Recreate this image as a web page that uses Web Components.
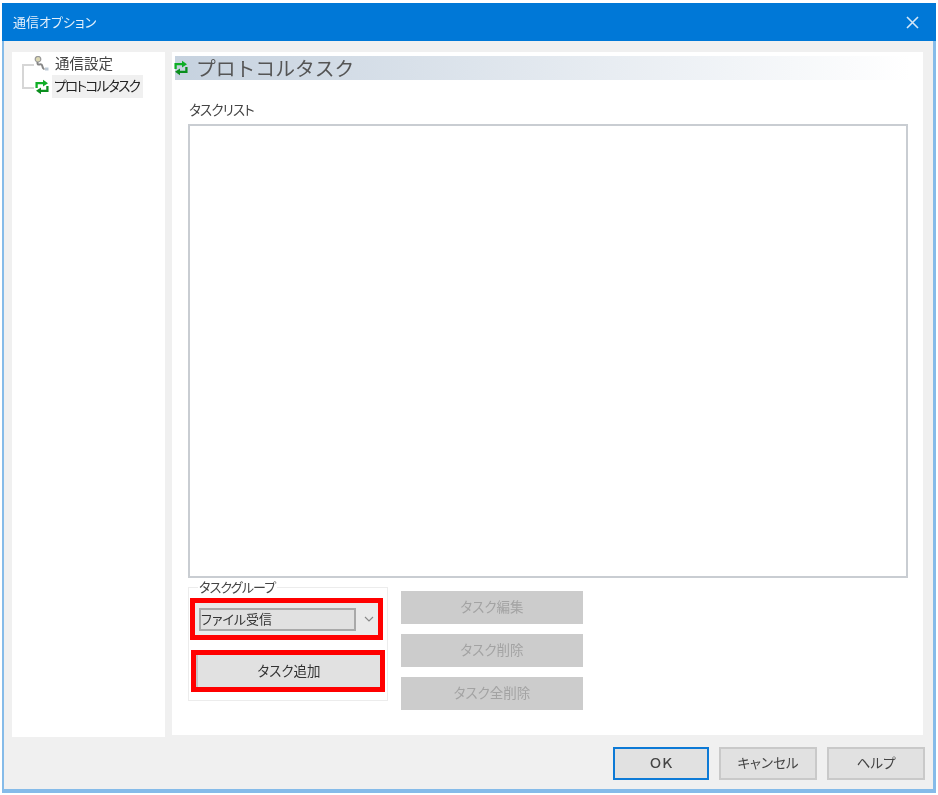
<!DOCTYPE html>
<html lang="ja">
<head>
<meta charset="utf-8">
<title>通信オプション</title>
<style>
  html, body { margin: 0; padding: 0; background: #fff; }
  body { font-family: "Noto Sans CJK JP", "Noto Sans", sans-serif; font-feature-settings: "palt"; }
</style>
</head>
<body>
<x-dialog heading="通信オプション">
  <x-tree slot="nav">
    <x-tree-item icon="plug" pos="first">通信設定</x-tree-item>
    <x-tree-item icon="cycle" pos="last" selected>プロトコルタスク</x-tree-item>
  </x-tree>
  <x-task-page slot="main" heading="プロトコルタスク">
    <x-group-box label="タスクグループ" slot="group">
      <x-mark><x-combo value="ファイル受信"></x-combo></x-mark>
      <x-mark wide><x-btn fill>タスク追加</x-btn></x-mark>
    </x-group-box>
    <x-btn slot="actions" disabled>タスク編集</x-btn>
    <x-btn slot="actions" disabled>タスク削除</x-btn>
    <x-btn slot="actions" disabled>タスク全削除</x-btn>
  </x-task-page>
  <x-btn slot="footer" dialog default>ＯＫ</x-btn>
  <x-btn slot="footer" dialog>キャンセル</x-btn>
  <x-btn slot="footer" dialog>ヘルプ</x-btn>
</x-dialog>

<script>
const ICONS = {
  plug: `<svg width="16" height="16" viewBox="0 0 16 16" fill="none">
    <circle cx="4" cy="3.2" r="2.8" fill="#dcd8b4" stroke="#999" stroke-width="1.2"/>
    <path d="M3.5 6 C3 10.5 6 7.5 7.5 8.5 C9 9.5 8 13 10.5 13" stroke="#858585" stroke-width="2"/>
    <path d="M11 11.5 h3.5 v3 h-3.5 z" fill="#bcc8d4"/>
  </svg>`,
  cycle: `<svg width="16" height="16" viewBox="0 0 16 16" fill="none">
    <path d="M2.6 9 V4.2 H9.5" stroke="#0fae26" stroke-width="2.3"/>
    <path d="M9 .8 L14 4.2 L9 7.6 z" fill="#0fae26"/>
    <path d="M13.4 7 V11.8 H6.5" stroke="#0b8f1e" stroke-width="2.3"/>
    <path d="M7 8.4 L2 11.8 L7 15.2 z" fill="#0b8f1e"/>
  </svg>`
};

class XDialog extends HTMLElement {
  connectedCallback() {
    this.attachShadow({ mode: 'open' });
    this.shadowRoot.innerHTML = `
      <style>
        :host { display: flex; flex-direction: column; width: 934px; height: 790px; margin: 3px 0 0 2px; filter: blur(.6px); }
        .title { flex: none; height: 38px; background: #0078d7; color: #e4f0fb; display: flex; align-items: center; padding: 0 17px 0 11px; font-size: 13px; }
        .title span { flex: 1; padding-bottom: 2px; }
        .body { flex: 1; min-height: 0; display: flex; flex-direction: column; background: #f0f0f0; border: solid #85bbe9; border-width: 0 3px 4px 2px; }
        .panes { flex: none; display: flex; gap: 7px; padding: 11px 10px 0 8px; height: 685px; }
        .foot { display: flex; justify-content: flex-end; gap: 10px; padding: 10px 8px 0 0; }
        ::slotted([slot=nav]) { flex: none; }
        ::slotted([slot=main]) { flex: 1; }
      </style>
      <div class="title"><span>${this.getAttribute('heading')}</span>
        <svg width="13" height="13" viewBox="0 0 13 13"><path d="M1 1 L12 12 M12 1 L1 12" stroke="#d5e8f8" stroke-width="1.6"/></svg>
      </div>
      <div class="body">
        <div class="panes"><slot name="nav"></slot><slot name="main"></slot></div>
        <div class="foot"><slot name="footer"></slot></div>
      </div>`;
  }
}

class XTree extends HTMLElement {
  connectedCallback() {
    this.attachShadow({ mode: 'open' });
    this.shadowRoot.innerHTML = `
      <style>:host { display: block; width: 153px; height: 685px; background: #fff; box-sizing: border-box; }</style>
      <slot></slot>`;
  }
}

class XTreeItem extends HTMLElement {
  connectedCallback() {
    const first = this.getAttribute('pos') === 'first';
    this.attachShadow({ mode: 'open' });
    this.shadowRoot.innerHTML = `
      <style>
        :host { display: flex; align-items: center; height: 23px; padding-left: 10px; font-size: 14.5px; color: #444; }
        .g { flex: none; width: 12px; height: 23px;
          background:
            linear-gradient(#d6d6d6,#d6d6d6) 0 12px / 12px 2px no-repeat,
            linear-gradient(#d6d6d6,#d6d6d6) 0 ${first ? '12px' : '0'} / 2px ${first ? '11px' : '13px'} no-repeat; }
        .i { flex: none; width: 16px; height: 16px; margin: 0 2px 0 0; display: flex; }
        .t { box-sizing: border-box; padding: 0 2px 0 3px; height: 23px; line-height: 21px; white-space: nowrap; width: 91px; }
        :host([selected]) .t { background: #f0f0f0; color: #222; font-size: 13.6px; letter-spacing: -1.6px; padding-left: 2px; }
      </style>
      <span class="g"></span><span class="i">${ICONS[this.getAttribute('icon')]}</span>
      <span class="t"><slot></slot></span>`;
  }
}

class XTaskPage extends HTMLElement {
  connectedCallback() {
    this.attachShadow({ mode: 'open' });
    this.shadowRoot.innerHTML = `
      <style>
        :host { display: block; height: 683px; background: #fff; box-sizing: border-box; padding-top: 4px; }
        .head { height: 24px; margin: 0 13px 0 3px; background: linear-gradient(90deg, #c6d2df, #ffffff); display: flex; align-items: center; }
        .head svg { flex: none; margin: 0 0 0 -2px; }
        .head span { margin-left: 7px; font-size: 19.8px; color: #555; font-feature-settings: normal; line-height: 24px; white-space: nowrap; }
        .content { padding: 20px 15px 0 16px; }
        .lbl { height: 20px; line-height: 18px; font-size: 13.5px; letter-spacing: -.8px; color: #444; padding-left: 1px; }
        .list { height: 454px; box-sizing: border-box; margin-top: 4px; border: 2px solid #c9cdd2; background: #fff; }
        .row { display: flex; }
        .acts { display: flex; flex-direction: column; gap: 10px; width: 182px; margin: 13px 0 0 13px; }
      </style>
      <div class="head">${ICONS.cycle}<span>${this.getAttribute('heading')}</span></div>
      <div class="content">
        <div class="lbl">タスクリスト</div>
        <div class="list"></div>
        <div class="row">
          <slot name="group"></slot>
          <div class="acts"><slot name="actions"></slot></div>
        </div>
      </div>`;
  }
}

class XGroupBox extends HTMLElement {
  connectedCallback() {
    this.attachShadow({ mode: 'open' });
    this.shadowRoot.innerHTML = `
      <style>
        :host { display: block; flex: none; width: 200px; }
        fieldset { margin: 0; padding: 2px 2px 8px 1px; border: 1px solid #ececec; box-sizing: border-box; width: 200px; height: 123px; min-width: 0; }
        legend { margin-left: 8px; padding: 0 1px; font-size: 13px; letter-spacing: -.8px; height: 18px; line-height: 17px; color: #444; }
        .stack { display: flex; flex-direction: column; gap: 10px; }
      </style>
      <fieldset><legend>${this.getAttribute('label')}</legend><div class="stack"><slot></slot></div></fieldset>`;
  }
}

class XMark extends HTMLElement {
  connectedCallback() {
    this.attachShadow({ mode: 'open' });
    this.shadowRoot.innerHTML = `
      <style>
        :host { display: flex; box-sizing: border-box; width: 193px; height: 42px; border: 5px solid #f00; }
        :host([wide]) { width: 194px; margin-left: 1px; }
        ::slotted(*) { flex: 1; }
      </style><slot></slot>`;
  }
}

class XCombo extends HTMLElement {
  connectedCallback() {
    this.attachShadow({ mode: 'open' });
    this.shadowRoot.innerHTML = `
      <style>
        :host { display: flex; align-items: center; box-sizing: border-box; padding: 0 0 0 4px; background: #eaeaea; font-size: 13px; color: #333; }
        .v { box-sizing: border-box; width: 157px; height: 23px; line-height: 17px; border: 2px solid #a9a9a9; background: #e1e1e1; white-space: nowrap; }
        .a { flex: 1; display: flex; justify-content: center; padding-left: 4px; }
      </style>
      <div class="v">${this.getAttribute('value')}</div>
      <div class="a"><svg width="10" height="6" viewBox="0 0 10 6" fill="none"><path d="M1 1 L5 5 L9 1" stroke="#888" stroke-width="1.1"/></svg></div>`;
  }
}

class XBtn extends HTMLElement {
  connectedCallback() {
    this.attachShadow({ mode: 'open' });
    this.shadowRoot.innerHTML = `
      <style>
        :host { display: flex; align-items: center; justify-content: center; box-sizing: border-box; height: 33px; padding-bottom: 3px; background: #e1e1e1; color: #444; font-size: 13.5px; white-space: nowrap; }
        :host([disabled]) { background: #cccccc; color: #a3a3a3; }
        :host([fill]) { border-left: 2px solid #c4c4c4; height: 32px; color: #333; }
        :host([dialog]) { width: 98px; border: 2px solid #c9c9c9; }
        :host([default]) { width: 96px; border-color: #0d7ad6; font-weight: 500; }
      </style><slot></slot>`;
  }
}

customElements.define('x-dialog', XDialog);
customElements.define('x-tree', XTree);
customElements.define('x-tree-item', XTreeItem);
customElements.define('x-task-page', XTaskPage);
customElements.define('x-group-box', XGroupBox);
customElements.define('x-mark', XMark);
customElements.define('x-combo', XCombo);
customElements.define('x-btn', XBtn);
</script>
</body>
</html>
